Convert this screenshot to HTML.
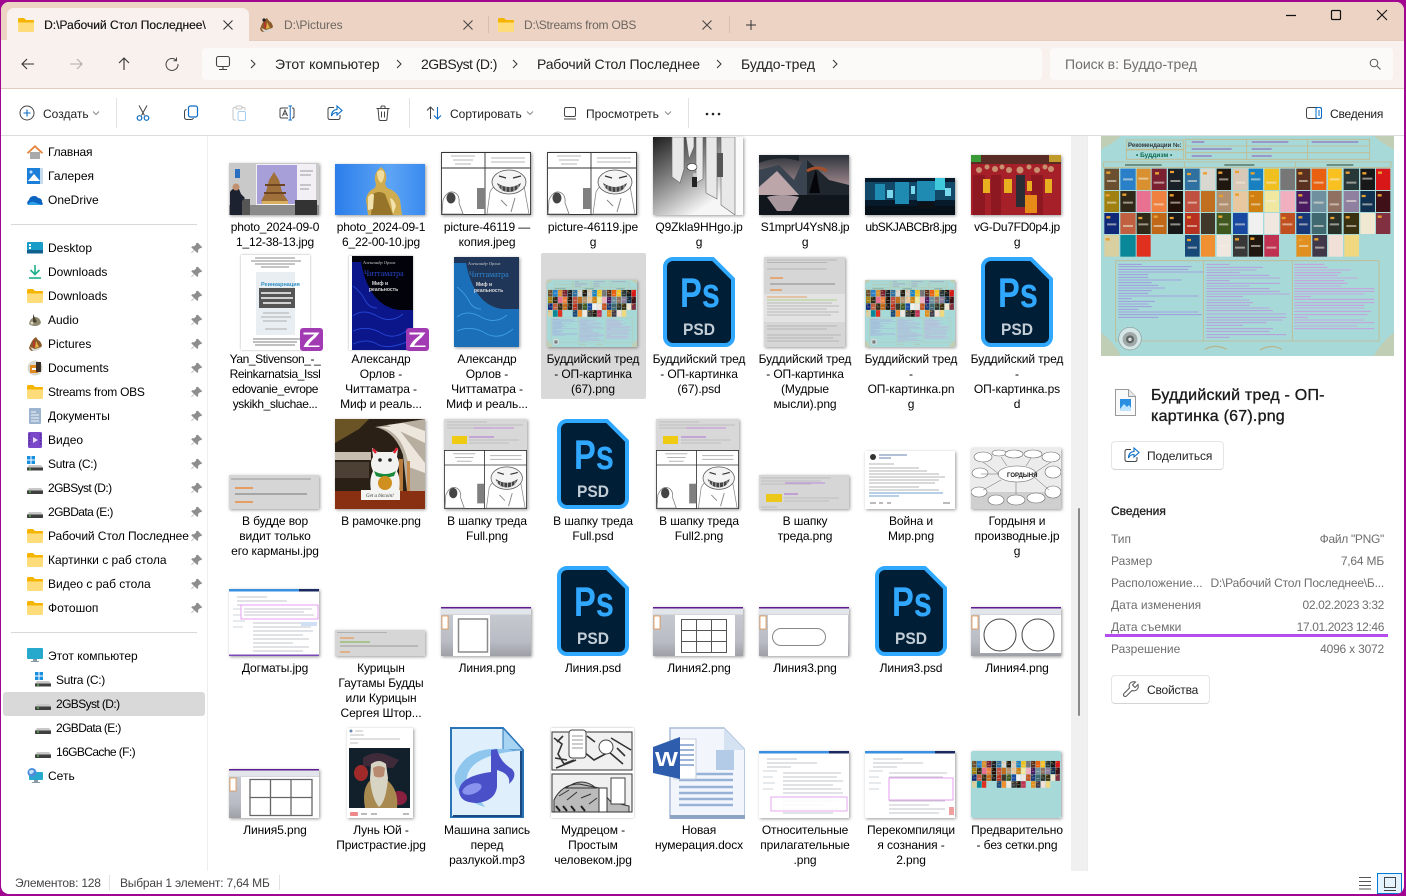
<!DOCTYPE html>
<html lang="ru"><head><meta charset="utf-8"><title>Проводник</title>
<style>
*{box-sizing:border-box}
html,body{margin:0;padding:0;width:1406px;height:896px;overflow:hidden;background:#a0068f;font-family:"Liberation Sans","Noto Sans CJK SC",sans-serif;font-size:12px;color:#111}
#w{position:absolute;left:1px;top:2px;width:1403px;height:892px;background:#fff;border-radius:8px;overflow:hidden}
#r{position:absolute;left:-1px;top:-2px;width:1406px;height:896px}
.a{position:absolute}
.i{position:absolute;width:16px;height:16px;overflow:visible}
.n{position:absolute;line-height:16px;white-space:nowrap;color:#000}
.b{position:absolute;font-size:14px;line-height:18px;white-space:nowrap;color:#222}
.l{position:absolute;width:106px;text-align:center;line-height:15px;white-space:nowrap;color:#000;letter-spacing:-.1px}
.t{position:absolute;box-shadow:1px 1px 3px rgba(0,0,0,.4);filter:blur(.3px);display:block}
.p{position:absolute;display:block;width:72px;height:90px}
.d{position:absolute;line-height:16px;color:#6e6e6e;white-space:nowrap}
.v{position:absolute;right:22px;line-height:16px;color:#6e6e6e;white-space:nowrap;letter-spacing:-.2px}
.s{position:absolute;background:#e2e2e2;width:1px}
.nar{letter-spacing:-.6px}
</style></head><body>
<svg width="0" height="0" style="position:absolute"><defs>
<symbol id="folder" viewBox="0 0 16 16"><path d="M0 2.500Q0 1 1.500 1H6l2 2h7q1 0 1 1v1H0z" fill="#f4b400"/><path d="M0 5h16v8.500q0 1.500-1.500 1.500h-13Q0 15 0 13.500z" fill="#ffdc7a"/><path d="M0 5h16v1H0z" fill="#fbc93a"/></symbol>
<symbol id="drive" viewBox="0 0 16 16"><path d="M2 8h12l2 2.500H0z" fill="#c9c9c9"/><rect y="10.500" width="16" height="3.500" rx=".5" fill="#3f3f3f"/><rect x="2" y="11.500" width="2" height="1" fill="#5fe05f"/></symbol>
<symbol id="win" viewBox="0 0 16 16"><path d="M0 0h3.500v3.500H0zM4.500 0H8v3.500H4.500zM0 4.500h3.500V8H0zM4.500 4.500H8V8H4.500z" fill="#1a8fe0"/><path d="M6 9h8l2 2.500H0L2 9z" fill="#c9c9c9"/><rect y="11.500" width="16" height="3" fill="#3f3f3f"/><rect x="2" y="12.500" width="2" height="1" fill="#5fe05f"/></symbol>
<symbol id="pin" viewBox="0 0 12 12"><path d="M6.800.8l4.400 4.400-1.100 1-1-.2-2 2 .1 2-1 1L3.400 8.200.7 11 .2 10.800 3 8 .2 5.200l1-1 2 .1 2-2-.2-1z" fill="#8e8e8e"/></symbol>
<symbol id="ps" viewBox="0 0 72 90"><path d="M10 2H50L70 22V80a8 8 0 0 1-8 8H10a8 8 0 0 1-8-8V10a8 8 0 0 1 8-8z" fill="#001e36" stroke="#31a8ff" stroke-width="4" stroke-linejoin="round"/><text x="17" y="50" font-family="Liberation Sans" font-weight="bold" font-size="42" fill="#31a8ff" textLength="40" lengthAdjust="spacingAndGlyphs">Ps</text><text x="20" y="78" font-family="Liberation Sans" font-weight="bold" font-size="17" fill="#c3cdd6" textLength="32" lengthAdjust="spacingAndGlyphs">PSD</text></symbol>
<symbol id="comic" viewBox="0 0 90 63" preserveAspectRatio="none"><rect width="90" height="63" fill="#fff"/><path d="M.5.500h89v62H.500zM44 .5v62M.5 16h89" fill="none" stroke="#333" stroke-width=".9"/><path d="M10 4h24M12 8h20M14 12h16M50 6h34M50 10h34" stroke="#b5b5b5" stroke-width="1"/><rect x="36" y="36" width="8" height="21" fill="#808080"/><path d="M2 48q4-9 10-8 7 2 6 11l4 11H1z" fill="#fff" stroke="#777" stroke-width=".8"/><ellipse cx="10" cy="46" rx="4.500" ry="5.500" fill="#444"/><path d="M46 62l3-22q3-6 8-8l26 2 5 28z" fill="#fff" stroke="#888" stroke-width=".8"/><ellipse cx="68" cy="30" rx="17" ry="12" fill="#f4f4f4" stroke="#555" stroke-width=".8"/><path d="M56 31q12 8 24 0-3 9-12 9t-12-9z" fill="#444"/><path d="M58 33v5M61 34v6M65 35v6M69 35v6M73 34v6M77 33v5" stroke="#ddd" stroke-width=".8"/><path d="M58 24l7 2M72 26l8-2" stroke="#333" stroke-width="1.200"/><path d="M74 46l-4 14M60 48l6 6" stroke="#888"/></symbol>
<symbol id="books" viewBox="18 0 879 660" preserveAspectRatio="none">
<g><rect x="28" y="98" width="44" height="64" fill="#6a5030"/><rect x="76" y="98" width="46" height="64" fill="#2a80c8"/><rect x="125" y="98" width="42" height="64" fill="#d89030"/><rect x="170" y="98" width="45" height="64" fill="#7a2030"/><rect x="219" y="98" width="45" height="64" fill="#1a2028"/><rect x="270" y="98" width="44" height="64" fill="#3070a0"/><rect x="318" y="98" width="42" height="64" fill="#d8d8d0"/><rect x="365" y="98" width="43" height="64" fill="#201810"/><rect x="414" y="98" width="44" height="64" fill="#d8c8b8"/><rect x="461" y="98" width="43" height="64" fill="#1880c0"/><rect x="508" y="98" width="44" height="64" fill="#f0c020"/><rect x="556" y="98" width="44" height="64" fill="#777"/><rect x="604" y="98" width="42" height="64" fill="#5a3020"/><rect x="650" y="98" width="44" height="64" fill="#e86010"/><rect x="699" y="98" width="41" height="64" fill="#f8c020"/><rect x="746" y="98" width="46" height="64" fill="#283838"/><rect x="796" y="98" width="44" height="64" fill="#181818"/><rect x="843" y="98" width="43" height="64" fill="#d81818"/></g>
<g><rect x="28" y="165" width="44" height="63" fill="#a08010"/><rect x="76" y="165" width="46" height="63" fill="#302818"/><rect x="125" y="165" width="42" height="63" fill="#e87090"/><rect x="170" y="165" width="45" height="63" fill="#f08040"/><rect x="219" y="165" width="45" height="63" fill="#201008"/><rect x="270" y="165" width="44" height="63" fill="#c05040"/><rect x="318" y="165" width="42" height="63" fill="#c07020"/><rect x="365" y="165" width="43" height="63" fill="#b09070"/><rect x="414" y="165" width="44" height="63" fill="#e8c8a0"/><rect x="461" y="165" width="43" height="63" fill="#d08010"/><rect x="508" y="165" width="44" height="63" fill="#f0e8a0"/><rect x="556" y="165" width="44" height="63" fill="#f0b0c0"/><rect x="604" y="165" width="42" height="63" fill="#4a1a60"/><rect x="650" y="165" width="44" height="63" fill="#7090a0"/><rect x="699" y="165" width="41" height="63" fill="#907060"/><rect x="746" y="165" width="46" height="63" fill="#9080a0"/><rect x="796" y="165" width="44" height="63" fill="#103050"/><rect x="843" y="165" width="43" height="63" fill="#401018"/></g>
<g><rect x="28" y="231" width="44" height="63" fill="#102878"/><rect x="76" y="231" width="46" height="63" fill="#c06040"/><rect x="125" y="231" width="42" height="63" fill="#302818"/><rect x="170" y="231" width="45" height="63" fill="#c06818"/><rect x="219" y="231" width="45" height="63" fill="#181818"/><rect x="270" y="231" width="44" height="63" fill="#b83020"/><rect x="318" y="231" width="42" height="63" fill="#403828"/><rect x="365" y="231" width="43" height="63" fill="#405820"/><rect x="414" y="231" width="44" height="63" fill="#1848a0"/><rect x="461" y="231" width="43" height="63" fill="#f0f0f0"/><rect x="508" y="231" width="44" height="63" fill="#f0e8e0"/><rect x="556" y="231" width="44" height="63" fill="#c05020"/><rect x="604" y="231" width="42" height="63" fill="#183878"/><rect x="650" y="231" width="44" height="63" fill="#406870"/><rect x="699" y="231" width="41" height="63" fill="#283028"/><rect x="746" y="231" width="46" height="63" fill="#383010"/><rect x="796" y="231" width="44" height="63" fill="#f0e8d0"/><rect x="843" y="231" width="43" height="63" fill="#803040"/></g>
<g><rect x="28" y="297" width="44" height="65" fill="#d8d0a0"/><rect x="76" y="297" width="46" height="65" fill="#088898"/><rect x="125" y="297" width="42" height="65" fill="#e03020"/><rect x="270" y="297" width="44" height="65" fill="#184878"/><rect x="318" y="297" width="42" height="65" fill="#f09030"/><rect x="365" y="297" width="43" height="65" fill="#f0e8e0"/><rect x="414" y="297" width="44" height="65" fill="#383838"/><rect x="461" y="297" width="43" height="65" fill="#201810"/><rect x="508" y="297" width="44" height="65" fill="#c03050"/><rect x="604" y="297" width="44" height="65" fill="#e09020"/><rect x="652" y="297" width="44" height="65" fill="#403848"/><rect x="700" y="297" width="44" height="65" fill="#f0e0d8"/><rect x="748" y="297" width="44" height="65" fill="#f0d880"/></g>
<path d="M34 110h12M180 112h12M225 108h12M276 114h12M324 112h12M370 110h12M420 108h12M467 112h12M610 112h12M752 110h12M802 112h12M849 110h12M32 178h12M82 176h12M224 178h12M372 180h12M420 176h12M466 180h12M610 178h12M800 180h12M848 178h12M34 244h12M130 246h12M176 242h12M224 246h12M276 244h12M370 242h12M560 246h12M610 244h12M706 246h12M752 244h12M848 242h12M32 310h12M276 312h12M420 310h12M466 308h12M610 312h12M658 310h12" stroke="#e8a030" stroke-width="7"/>
<path d="M36 135h28M84 130h30M130 128h30M176 140h32M226 135h30M278 135h28M372 130h28M422 140h28M468 130h28M514 140h30M612 135h26M656 140h30M704 130h30M754 140h30M802 128h30M36 200h28M84 200h30M176 205h30M226 200h30M278 200h28M372 205h28M468 205h28M514 195h30M612 200h26M656 200h30M704 205h28M754 195h30M802 205h30M36 265h28M84 270h30M130 265h30M176 270h30M226 265h30M276 270h30M372 265h28M420 265h30M562 265h30M612 265h26M656 270h30M704 265h28M754 270h30M278 335h28M372 330h28M420 335h30M468 330h28M514 335h30M612 330h28M660 335h28" stroke="#f4efe2" stroke-width="6" opacity=".55"/>
</symbol>
<symbol id="poster" viewBox="18 0 879 660" preserveAspectRatio="none"><rect x="18" width="879" height="660" fill="#a8d9d9"/>
<path d="M18 0h60q-20 20-60 40zM897 0h-60q20 20 60 40zM18 660h60q-20-40-60-70zM897 660h-60q20-40 60-70z" fill="#cfc79b" opacity=".6"/>
<path d="M94 12h172v30H94zM94 40h172v30H94zM272 10h552v60H272zM272 30h552M272 50h552M455 10v60M638 10v60M26 78h862v16H26zM268 78v16M602 78v16M62 374h790v241H62zM325 374v241M592 374v241" fill="none" stroke="#c2b98c" stroke-width="2.500"/>
<use href="#books" x="18" width="879" height="660"/>
<path d="M290 18h38M470 18h110M650 18h140M290 39h120M470 39h60M290 60h60M470 60h60" stroke="#8a4fb8" stroke-width="3.500" opacity=".75"/>
<path d="M90 87h110M388 87h90M695 87h80" stroke="#4e6a58" stroke-width="5" opacity=".75"/>
<path d="M70 385h70M70 392h220M70 400h210M70 408h255M70 416h90M70 424h90M70 432h190M70 440h100M70 448h120M70 456h140M70 464h100M70 472h90M70 480h240M70 488h40M70 496h110M70 504h90M70 512h100M70 520h60M70 528h240M70 536h250M70 544h120" stroke="#9a70e0" stroke-width="2.400" opacity=".7"/>
<path d="M334 385h70M334 394h170M334 402h150M334 410h100M334 418h190M334 426h220M334 434h70M334 442h220M334 450h130M334 458h190M334 466h220M334 474h250M334 482h110M334 492h130M334 500h140M334 508h130M334 516h190M334 524h200M334 534h240M334 544h240M334 552h230M334 560h180M334 568h110M334 578h200M334 586h190M334 596h240M334 604h70" stroke="#bf78dc" stroke-width="2.400" opacity=".7"/>
<path d="M598 385h90M598 394h100M598 402h170M598 410h140M598 418h130M598 426h190M598 434h150M598 442h160M598 450h140M598 458h240M598 466h240M598 474h210M598 482h50M598 490h240M598 500h240M598 508h210M598 516h210M598 526h230M598 536h220M598 544h40M598 552h210M598 560h240M598 570h190M598 578h240" stroke="#d67fe0" stroke-width="2.400" opacity=".75"/>
<circle cx="105" cy="608" r="34" fill="#d4e6e6" stroke="#8a9a9a" stroke-width="2"/><circle cx="105" cy="610" r="22" fill="#a0a8a8"/><circle cx="105" cy="610" r="12" fill="#5e6666"/><circle cx="105" cy="610" r="5" fill="#ddd"/>
<path d="M330 640q30-18 65 0M495 642q35-20 65-2" fill="none" stroke="#b9ae7a" stroke-width="4" opacity=".8"/>
</symbol>
<symbol id="forum" viewBox="0 0 90 34" preserveAspectRatio="none"><rect width="90" height="34" fill="#d6d6d6"/><path d="M2 4h80" stroke="#a5a5a5" stroke-width="1.200"/><path d="M6 13h18" stroke="#ea8a3a" stroke-width="1.600"/><path d="M6 19h72" stroke="#8a8a8a" stroke-width="1.200"/><path d="M6 27h18" stroke="#ea8a3a" stroke-width="1.600"/></symbol>
<symbol id="pptbase" viewBox="0 0 90 49" preserveAspectRatio="none"><defs><linearGradient id="pg" x1="0" y1="0" x2="0" y2="1"><stop offset="0" stop-color="#c9ccd2"/><stop offset=".7" stop-color="#b9bcc4"/><stop offset="1" stop-color="#9ea0a6"/></linearGradient></defs><rect width="90" height="49" fill="url(#pg)"/><rect width="90" height="1.500" fill="#5f1d91"/><rect y="1.500" width="90" height="6" fill="#e2e5ea"/><rect x="1" y="9" width="6" height="13" fill="#fff" stroke="#e0883a" stroke-width=".7"/></symbol>
<symbol id="badge" viewBox="0 0 23 23"><rect width="23" height="23" rx="3" fill="#a23bb3"/><path d="M3.500 4.500h16l-4 5Q10 14 8 17.500h11.500v1.500H3.500q2-5 7.500-9.500l3.500-3H3.500z" fill="#fff"/></symbol>
<symbol id="webdoc" viewBox="0 0 90 67" preserveAspectRatio="none"><rect width="90" height="67" fill="#fff"/><rect width="90" height="2.500" fill="#3a8fe0"/><rect x="70" width="20" height="2.500" fill="#1a2a60"/><path d="M8 8h30M8 12h50M8 16h24M24 22h58M24 26h54M24 30h60M24 34h50M24 38h58M24 42h60M24 46h50M24 50h56M24 54h40M24 58h56M24 62h50" stroke="#aeb4bd" stroke-width=".8"/><path d="M4 20h14M4 26h10M4 32h12M4 38h10" stroke="#c0c6d0" stroke-width=".8"/></symbol>
</defs></svg>

<div id="w"><div id="r">
<!-- title bar -->
<div class="a" style="left:0;top:0;width:1406px;height:40px;background:#ecd3c3"></div>
<div class="a" style="left:7px;top:8px;width:242px;height:34px;background:#f9f1ed;border-radius:7px 7px 0 0"></div>
<svg class="i" style="left:18px;top:17px"><use href="#folder"/></svg>
<div class="n" style="left:44px;top:17px;width:165px;overflow:hidden;color:#1a1a1a;text-shadow:.2px 0 0 #1a1a1a">D:\Рабочий Стол Последнее\</div>
<svg class="i" style="left:220px;top:17px" viewBox="0 0 16 16"><path d="M3.500 3.500l9 9M12.500 3.500l-9 9" stroke="#333" stroke-width="1" fill="none"/></svg>
<svg class="i" style="left:258px;top:17px" viewBox="0 0 16 16"><path d="M2 12q3-9 7-11l2 3q3 1 4 6-3 4-9 5-3 0-4-3z" fill="#8b5a2b"/><path d="M6 3l3 6-3 3z" fill="#b8372c"/><path d="M9 5l3 6-4 1z" fill="#e0b040"/><path d="M3 11l5 2 6-2-2 3-6 1z" fill="#d8d8d0"/><circle cx="6" cy="3" r="1.600" fill="#222"/></svg>
<div class="n" style="left:284px;top:17px;color:#6d6561">D:\Pictures</div>
<svg class="i" style="left:460px;top:17px" viewBox="0 0 16 16"><path d="M3.500 3.500l9 9M12.500 3.500l-9 9" stroke="#444" stroke-width="1" fill="none"/></svg>
<div class="a" style="left:488px;top:16px;width:1px;height:17px;background:#d6bfb0"></div>
<svg class="i" style="left:498px;top:17px"><use href="#folder"/></svg>
<div class="n" style="left:524px;top:17px;color:#6d6561;letter-spacing:-.2px">D:\Streams from OBS</div>
<svg class="i" style="left:699px;top:17px" viewBox="0 0 16 16"><path d="M3.500 3.500l9 9M12.500 3.500l-9 9" stroke="#444" stroke-width="1" fill="none"/></svg>
<div class="a" style="left:729px;top:16px;width:1px;height:17px;background:#d6bfb0"></div>
<svg class="i" style="left:743px;top:17px" viewBox="0 0 16 16"><path d="M8 3v10M3 8h10" stroke="#333" stroke-width="1" fill="none"/></svg>
<svg class="i" style="left:1283px;top:7px" viewBox="0 0 16 16"><path d="M3 8.500h10" stroke="#111" stroke-width="1.200"/></svg>
<svg class="i" style="left:1328px;top:7px" viewBox="0 0 16 16"><rect x="3.500" y="3.500" width="9" height="9" rx="1" fill="none" stroke="#111" stroke-width="1.200"/></svg>
<svg class="i" style="left:1374px;top:7px" viewBox="0 0 16 16"><path d="M3 3l10 10M13 3L3 13" stroke="#111" stroke-width="1.100"/></svg>

<!-- address row -->
<div class="a" style="left:0;top:40px;width:1406px;height:48px;background:#f9f1ed"></div>
<div class="a" style="top:40px;right:0;height:0;border-top:1px solid #e3cebf;left:249px"></div>
<div class="a" style="left:0;top:88px;width:1406px;height:1px;background:#e0cdbf"></div>
<div class="a" style="left:202px;top:48px;width:840px;height:32px;background:#fcfaf8;border-radius:4px"></div>
<div class="a" style="left:1050px;top:48px;width:343px;height:32px;background:#fcfaf8;border-radius:4px"></div>
<svg class="i" style="left:20px;top:56px" viewBox="0 0 16 16"><path d="M14 8H2M7 3L2 8l5 5" fill="none" stroke="#333" stroke-width="1.100"/></svg>
<svg class="i" style="left:68px;top:56px" viewBox="0 0 16 16"><path d="M2 8h12M9 3l5 5-5 5" fill="none" stroke="#b4aca8" stroke-width="1.100"/></svg>
<svg class="i" style="left:116px;top:56px" viewBox="0 0 16 16"><path d="M8 14V2M3 7l5-5 5 5" fill="none" stroke="#333" stroke-width="1.100"/></svg>
<svg class="i" style="left:164px;top:56px" viewBox="0 0 16 16"><path d="M12.500 4.500A6 6 0 1 0 14 8M12.500 1.500v3.200H9.500" fill="none" stroke="#444" stroke-width="1"/></svg>
<svg class="i" style="left:215px;top:55px" viewBox="0 0 16 16"><rect x="1.500" y="1.500" width="13" height="10" rx="2" fill="none" stroke="#444" stroke-width="1.100"/><path d="M4 14.500h8M8 11.500v3" stroke="#444" stroke-width="1.100"/></svg>
<svg class="a" style="left:250px;top:58px;width:6px;height:12px" viewBox="0 0 6 12"><path d="M1 2l4 4-4 4" fill="none" stroke="#333"/></svg>
<div class="b" style="left:275px;top:55px">Этот компьютер</div>
<svg class="a" style="left:396px;top:58px;width:6px;height:12px" viewBox="0 0 6 12"><path d="M1 2l4 4-4 4" fill="none" stroke="#333"/></svg>
<div class="b" style="left:421px;top:55px;letter-spacing:-.55px">2GBSyst (D:)</div>
<svg class="a" style="left:512px;top:58px;width:6px;height:12px" viewBox="0 0 6 12"><path d="M1 2l4 4-4 4" fill="none" stroke="#333"/></svg>
<div class="b" style="left:537px;top:55px;letter-spacing:-.18px">Рабочий Стол Последнее</div>
<svg class="a" style="left:716px;top:58px;width:6px;height:12px" viewBox="0 0 6 12"><path d="M1 2l4 4-4 4" fill="none" stroke="#333"/></svg>
<div class="b" style="left:741px;top:55px">Буддо-тред</div>
<svg class="a" style="left:832px;top:58px;width:6px;height:12px" viewBox="0 0 6 12"><path d="M1 2l4 4-4 4" fill="none" stroke="#333"/></svg>
<div class="b" style="left:1065px;top:55px;color:#6e6e6e">Поиск в: Буддо-тред</div>
<svg class="i" style="left:1367px;top:56px" viewBox="0 0 16 16"><circle cx="7" cy="7" r="3.800" fill="none" stroke="#555"/><path d="M10 10l3.500 3.500" stroke="#555"/></svg>

<!-- command bar -->
<div class="a" style="left:0;top:135px;width:1406px;height:1px;background:#dcdcdc"></div>
<svg class="i" style="left:19px;top:105px" viewBox="0 0 16 16"><circle cx="8" cy="8" r="7" fill="none" stroke="#444"/><path d="M8 4.500v7M4.500 8h7" stroke="#0a6cc4" stroke-width="1.100"/></svg>
<div class="n" style="left:43px;top:106px;color:#222">Создать</div>
<svg class="a" style="left:92px;top:110px;width:8px;height:6px" viewBox="0 0 8 6"><path d="M1 1.500l3 3 3-3" fill="none" stroke="#8a8a8a"/></svg>
<div class="s" style="left:116px;top:98px;height:30px"></div>
<svg class="i" style="left:135px;top:105px" viewBox="0 0 16 16"><path d="M4 .5l5.500 10M12 .5L6.500 10.500" stroke="#444" fill="none"/><circle cx="4.500" cy="13" r="2.300" fill="none" stroke="#0a6cc4" stroke-width="1.200"/><circle cx="11.500" cy="13" r="2.300" fill="none" stroke="#0a6cc4" stroke-width="1.200"/></svg>
<svg class="i" style="left:183px;top:105px" viewBox="0 0 16 16"><rect x="5.500" y="1" width="9" height="11" rx="2" fill="none" stroke="#0a6cc4" stroke-width="1.200"/><path d="M3.500 4.500Q1.500 5 1.500 7v5q0 2.500 2.500 2.500h4q2 0 2.500-1.500" fill="none" stroke="#444"/></svg>
<svg class="i" style="left:231px;top:105px" viewBox="0 0 16 16"><path d="M5 2.500H3.500Q2 2.500 2 4v9.500Q2 15 3.500 15H5M11 2.500h1.500q1.500 0 1.500 1.500v1.500" fill="none" stroke="#c6c6c6"/><rect x="5" y="1" width="6" height="3" rx="1" fill="none" stroke="#c6c6c6"/><rect x="7" y="6.500" width="7.500" height="9" rx="1.500" fill="none" stroke="#a9cfee"/></svg>
<svg class="i" style="left:279px;top:105px" viewBox="0 0 16 16"><path d="M9 3H2.500Q1 3 1 4.500v7Q1 13 2.500 13H9" fill="none" stroke="#444"/><path d="M13 3h.5Q15 3 15 4.500v7q0 1.500-1.500 1.500H13" fill="none" stroke="#444"/><path d="M9.500 1H13M9.500 15H13M11.200 1v14" stroke="#0a6cc4" fill="none"/><path d="M3.500 11L6 5l2.500 6M4.500 9h3" fill="none" stroke="#444"/></svg>
<svg class="i" style="left:327px;top:105px" viewBox="0 0 16 16"><path d="M7 2.500H3Q1 2.500 1 4.500v8Q1 14.500 3 14.500h8q2 0 2-2V10" fill="none" stroke="#444"/><path d="M10 1l5 4.500L10 10V7.500Q6 7.500 4.500 11q0-6 5.500-6.500z" fill="none" stroke="#0a6cc4" stroke-width="1.100"/></svg>
<svg class="i" style="left:375px;top:105px" viewBox="0 0 16 16"><path d="M1.500 3.500h13M6 3.500V2q0-1 1-1h2q1 0 1 1v1.500M3 3.500l1 10.500q0 1.500 1.500 1.500h5q1.500 0 1.500-1.500L13 3.500M6.500 6.500v6M9.500 6.500v6" fill="none" stroke="#444"/></svg>
<div class="s" style="left:409px;top:98px;height:30px"></div>
<svg class="i" style="left:426px;top:105px" viewBox="0 0 16 16"><path d="M4.500 14V2M1 5.500L4.500 2 8 5.500" fill="none" stroke="#444"/><path d="M11.500 2v12M8 10.500l3.500 3.500 3.500-3.500" fill="none" stroke="#0a6cc4" stroke-width="1.100"/></svg>
<div class="n" style="left:450px;top:106px;color:#222">Сортировать</div>
<svg class="a" style="left:526px;top:110px;width:8px;height:6px" viewBox="0 0 8 6"><path d="M1 1.500l3 3 3-3" fill="none" stroke="#8a8a8a"/></svg>
<svg class="i" style="left:562px;top:105px" viewBox="0 0 16 16"><rect x="2.500" y="2.500" width="11" height="9" rx="1.500" fill="none" stroke="#444"/><path d="M2 14h12" stroke="#444"/></svg>
<div class="n" style="left:586px;top:106px;color:#222">Просмотреть</div>
<svg class="a" style="left:664px;top:110px;width:8px;height:6px" viewBox="0 0 8 6"><path d="M1 1.500l3 3 3-3" fill="none" stroke="#8a8a8a"/></svg>
<div class="s" style="left:688px;top:98px;height:30px"></div>
<svg class="i" style="left:705px;top:106px" viewBox="0 0 16 16"><circle cx="2" cy="8" r="1.300" fill="#222"/><circle cx="8" cy="8" r="1.300" fill="#222"/><circle cx="14" cy="8" r="1.300" fill="#222"/></svg>
<svg class="i" style="left:1306px;top:105px" viewBox="0 0 16 16"><rect x=".5" y="2.500" width="15" height="11" rx="2" fill="none" stroke="#444"/><rect x="10" y="2.500" width="5.500" height="11" rx="1.500" fill="none" stroke="#0a6cc4"/><path d="M12 6h2M12 8h2M12 10h2" stroke="#0a6cc4"/></svg>
<div class="n" style="left:1330px;top:106px;color:#222;letter-spacing:-.2px">Сведения</div>

<!-- nav -->
<div class="a" style="left:207px;top:136px;width:1px;height:735px;background:#eee"></div>
<svg class="i" style="left:27px;top:144px" viewBox="0 0 16 16"><path d="M3 8h10v7H3z" fill="#aaa"/><path d="M8 1L0 8.500 1 10l7-6.500L15 10l1-1.500z" fill="#e8833a"/></svg>
<div class="n" style="left:48px;top:144px;letter-spacing:-.2px">Главная</div>
<svg class="i" style="left:27px;top:168px" viewBox="0 0 16 16"><rect width="16" height="16" fill="#1e7fd8"/><rect x="13" width="3" height="16" fill="#c8dcf0"/><path d="M1 13l6-7 6 7z" fill="#fff"/><circle cx="4" cy="4" r="1.500" fill="#bfe0ff"/></svg>
<div class="n" style="left:48px;top:168px">Галерея</div>
<svg class="i" style="left:27px;top:192px" viewBox="0 0 16 16"><path d="M1 13q-2-3 1-5 1-4 5-4 3 0 4 2 4 0 4 4 2 3-1 3z" fill="#0a64c0"/><path d="M1 13q2-4 6-3l8 3z" fill="#2fa0ea"/></svg>
<div class="n" style="left:48px;top:192px">OneDrive</div>
<div class="a" style="left:11px;top:224px;width:186px;height:1px;background:#d8d8d8"></div>

<svg class="i" style="left:27px;top:240px" viewBox="0 0 16 16"><rect y="2" width="16" height="11" rx="1" fill="#1a9cc8"/><rect y="10" width="16" height="3.500" fill="#0f5f8f"/><rect x="2" y="4" width="2" height="2" fill="#fff"/><rect x="2" y="7" width="2" height="2" fill="#fff"/></svg>
<div class="n" style="left:48px;top:240px">Desktop</div>
<svg class="i" style="left:27px;top:264px" viewBox="0 0 16 16"><path d="M8 1v9M3.500 6l4.500 4.500L12.500 6" fill="none" stroke="#1bb08a" stroke-width="1.600"/><path d="M2 14h12" stroke="#1bb08a" stroke-width="1.600"/></svg>
<div class="n" style="left:48px;top:264px">Downloads</div>
<svg class="i" style="left:27px;top:288px"><use href="#folder"/></svg>
<div class="n" style="left:48px;top:288px">Downloads</div>
<svg class="i" style="left:27px;top:312px" viewBox="0 0 16 16"><path d="M2 12q1-6 6-7 5 0 6 6-2 3-6 3t-6-2z" fill="#8f8a70"/><path d="M6 2l4 8-4 1z" fill="#4a4030"/><circle cx="5" cy="11" r="1.500" fill="#d9d5c2"/></svg>
<div class="n" style="left:48px;top:312px">Audio</div>
<svg class="i" style="left:27px;top:336px" viewBox="0 0 16 16"><path d="M2 12q3-9 7-11l2 3q3 1 4 6-3 4-9 5-3 0-4-3z" fill="#8b5a2b"/><path d="M6 3l3 6-3 3z" fill="#b8372c"/><path d="M9 5l3 6-4 1z" fill="#e0b040"/><path d="M3 11l5 2 6-2-2 3-6 1z" fill="#d8d8d0"/></svg>
<div class="n" style="left:48px;top:336px">Pictures</div>
<svg class="i" style="left:27px;top:360px" viewBox="0 0 16 16"><circle cx="8" cy="8" r="7.500" fill="#d8d8d0"/><path d="M3 5h8v8H3z" fill="#e08a20"/><path d="M9 2h5v10H9z" fill="#3a3028"/><path d="M5 8h4v2H5z" fill="#fff"/></svg>
<div class="n" style="left:48px;top:360px">Documents</div>
<svg class="i" style="left:27px;top:384px"><use href="#folder"/></svg>
<div class="n" style="left:48px;top:384px;letter-spacing:-.25px">Streams from OBS</div>
<svg class="i" style="left:27px;top:408px" viewBox="0 0 16 16"><rect x="2" y="0" width="12" height="16" rx="1" fill="#9db4d0"/><path d="M4 4h5M4 7h8M4 10h8M4 13h8" stroke="#eef3f8"/></svg>
<div class="n" style="left:48px;top:408px">Документы</div>
<svg class="i" style="left:27px;top:432px" viewBox="0 0 16 16"><rect x="1" width="14" height="16" rx="1.500" fill="#7a48c8"/><path d="M6 5l5 3-5 3z" fill="#e8dcf8"/><path d="M2.500 2v12M13.500 2v12" stroke="#4c2a90" stroke-dasharray="1.500 1.500" stroke-width="1.500"/></svg>
<div class="n" style="left:48px;top:432px">Видео</div>
<svg class="i" style="left:27px;top:456px"><use href="#win"/></svg>
<div class="n" style="left:48px;top:456px;letter-spacing:-.3px">Sutra (C:)</div>
<svg class="i" style="left:27px;top:480px"><use href="#drive"/></svg>
<div class="n nar" style="left:48px;top:480px">2GBSyst (D:)</div>
<svg class="i" style="left:27px;top:504px"><use href="#drive"/></svg>
<div class="n nar" style="left:48px;top:504px">2GBData (E:)</div>
<svg class="i" style="left:27px;top:528px"><use href="#folder"/></svg>
<div class="n" style="left:48px;top:528px;letter-spacing:-.1px">Рабочий Стол Последнее</div>
<svg class="i" style="left:27px;top:552px"><use href="#folder"/></svg>
<div class="n" style="left:48px;top:552px">Картинки с раб стола</div>
<svg class="i" style="left:27px;top:576px"><use href="#folder"/></svg>
<div class="n" style="left:48px;top:576px">Видео с раб стола</div>
<svg class="i" style="left:27px;top:600px"><use href="#folder"/></svg>
<div class="n" style="left:48px;top:600px">Фотошоп</div>
<svg class="a" style="left:191px;top:242px;width:12px;height:12px"><use href="#pin"/></svg><svg class="a" style="left:191px;top:266px;width:12px;height:12px"><use href="#pin"/></svg><svg class="a" style="left:191px;top:290px;width:12px;height:12px"><use href="#pin"/></svg><svg class="a" style="left:191px;top:314px;width:12px;height:12px"><use href="#pin"/></svg><svg class="a" style="left:191px;top:338px;width:12px;height:12px"><use href="#pin"/></svg><svg class="a" style="left:191px;top:362px;width:12px;height:12px"><use href="#pin"/></svg><svg class="a" style="left:191px;top:386px;width:12px;height:12px"><use href="#pin"/></svg><svg class="a" style="left:191px;top:410px;width:12px;height:12px"><use href="#pin"/></svg><svg class="a" style="left:191px;top:434px;width:12px;height:12px"><use href="#pin"/></svg><svg class="a" style="left:191px;top:458px;width:12px;height:12px"><use href="#pin"/></svg><svg class="a" style="left:191px;top:482px;width:12px;height:12px"><use href="#pin"/></svg><svg class="a" style="left:191px;top:506px;width:12px;height:12px"><use href="#pin"/></svg><svg class="a" style="left:191px;top:530px;width:12px;height:12px"><use href="#pin"/></svg><svg class="a" style="left:191px;top:554px;width:12px;height:12px"><use href="#pin"/></svg><svg class="a" style="left:191px;top:578px;width:12px;height:12px"><use href="#pin"/></svg><svg class="a" style="left:191px;top:602px;width:12px;height:12px"><use href="#pin"/></svg>
<div class="a" style="left:11px;top:632px;width:186px;height:1px;background:#d8d8d8"></div>
<svg class="i" style="left:27px;top:648px" viewBox="0 0 16 16"><rect width="16" height="11" rx="1" fill="#26a9cc"/><path d="M6 11h4v2h2v1H4v-1h2z" fill="#8a9aa5"/></svg>
<div class="n" style="left:48px;top:648px">Этот компьютер</div>
<svg class="i" style="left:35px;top:672px"><use href="#win"/></svg>
<div class="n" style="left:56px;top:672px;letter-spacing:-.3px">Sutra (C:)</div>
<div class="a" style="left:3px;top:692px;width:202px;height:24px;background:#d9d9d9;border-radius:3px"></div>
<svg class="i" style="left:35px;top:696px"><use href="#drive"/></svg>
<div class="n nar" style="left:56px;top:696px">2GBSyst (D:)</div>
<svg class="i" style="left:35px;top:720px"><use href="#drive"/></svg>
<div class="n nar" style="left:56px;top:720px">2GBData (E:)</div>
<svg class="i" style="left:35px;top:744px"><use href="#drive"/></svg>
<div class="n nar" style="left:56px;top:744px">16GBCache (F:)</div>
<svg class="i" style="left:27px;top:768px" viewBox="0 0 16 16"><rect x="2" y="4" width="14" height="8" rx="1" fill="#26a9cc"/><path d="M7 12h4v2h2v1H5v-1h2z" fill="#8a9aa5"/><circle cx="5" cy="4.500" r="4.500" fill="#4a8fdc"/><path d="M2 3q3-2 5 0-1 3-4 3z" fill="#cfe4f8"/></svg>
<div class="n" style="left:48px;top:768px">Сеть</div>

<!-- scrollbar -->
<div class="a" style="left:1071px;top:136px;width:16px;height:735px;background:#f0f0f0"></div>
<div class="a" style="left:1078px;top:508px;width:2px;height:208px;background:#8a8a8a;border-radius:1px"></div>
<div class="a" style="left:1087px;top:136px;width:1px;height:735px;background:#ececec"></div>

<!-- selected -->
<div class="a" style="left:541px;top:253px;width:105px;height:146px;background:#d9d9d9;border-radius:2px"></div>

<!-- ROW 1 -->
<svg class="t" style="left:229px;top:163px;width:90px;height:52px" viewBox="0 0 90 52"><rect width="90" height="52" fill="#c9c9c9"/><rect x="6" y="6" width="5" height="9" fill="#2a6fc0"/><rect x="27" y="1" width="60" height="41" fill="#f2f0f4"/><rect x="28" y="2" width="40" height="39" fill="#a7a0d8"/><path d="M32 38l5-9 3-12 5-8 5 8 3 12 6 9z" fill="#a0703a"/><path d="M36 22h20M35 30h22" stroke="#6e4520" stroke-width="2"/><path d="M33 38h26v3H33z" fill="#d8b060"/><path d="M71 8h13M71 12h11M71 22h11M71 26h9" stroke="#999"/><rect x="0" y="42" width="90" height="10" fill="#8a8a8a"/><rect x="66" y="37" width="22" height="15" fill="#333"/><rect x="11" y="36" width="10" height="16" fill="#555"/><path d="M1 52V29q4-6 9-3l2 5 4 4-3 3v14z" fill="#1c2230"/><circle cx="7" cy="24" r="3.500" fill="#c09070"/></svg>
<svg class="t" style="left:335px;top:164px;width:90px;height:51px" viewBox="0 0 90 51"><defs><linearGradient id="sk" x1="0" x2="1"><stop offset="0" stop-color="#2b7dea"/><stop offset=".6" stop-color="#5da5f5"/><stop offset="1" stop-color="#3a8aef"/></linearGradient></defs><rect width="90" height="51" fill="url(#sk)"/><path d="M33 51l-2-15q1-9 9-12l1-4q-4-10 5-17 8 6 4 17l2 4q10 3 13 12l2 15z" fill="#d0ac50"/><path d="M42 8q4-4 7 0 1 7-3 11-4-3-4-11z" fill="#f0dc9c"/><path d="M38 30q6-4 12 0l8 21H36z" fill="#96742a"/><path d="M33 33q4-5 6-2l-1 14-5 1zM55 34q4 1 6 8l-3 8z" fill="#f2e2ae"/></svg>
<svg class="t" style="left:441px;top:152px;width:90px;height:63px"><use href="#comic" width="90" height="63"/></svg>
<svg class="t" style="left:547px;top:152px;width:90px;height:63px"><use href="#comic" width="90" height="63"/></svg>
<svg class="t" style="left:653px;top:137px;width:90px;height:78px" viewBox="0 0 90 78"><defs><linearGradient id="gy" x1="0" y1="0" x2=".75" y2="1"><stop offset="0" stop-color="#1c1c1c"/><stop offset=".45" stop-color="#8a8a8a"/><stop offset=".85" stop-color="#f6f6f6"/></linearGradient></defs><rect width="90" height="78" fill="url(#gy)"/><rect x="82" width="8" height="78" fill="#fbfbfb"/><path d="M19 0h12v32l-4 14-8-6zM33 0h8v10l-5 12zM43 0h7v42l-7 4zM53 0h11v62l-11-6zM68 0h14v78l-14-10z" fill="#e8e8e8" stroke="#666" stroke-width=".6"/><rect x="64" y="16" width="6" height="24" fill="#555"/><ellipse cx="39" cy="30" rx="5" ry="3.500" fill="#fff" stroke="#222" stroke-width=".6"/><circle cx="42" cy="38" r="2" fill="#ccc"/><rect x="39" y="40" width="5" height="10" fill="#222"/></svg>
<svg class="t" style="left:759px;top:155px;width:90px;height:60px" viewBox="0 0 90 60"><defs><linearGradient id="ml" x1="0" y1="0" x2="0" y2="1"><stop offset="0" stop-color="#2e343c"/><stop offset=".55" stop-color="#a88e92"/><stop offset="1" stop-color="#0f1318"/></linearGradient></defs><rect width="90" height="60" fill="url(#ml)"/><path d="M0 8Q20 0 40 6V0H0z" fill="#1e242c"/><path d="M0 15L20 10l15 15 10-22 18 22 27 5v30H0z" fill="#3a4450"/><path d="M0 32l18-16 22 24H0z" fill="#bca6aa"/><path d="M48 40V5l22 20 20 5v10z" fill="#20262e"/><rect x="0" y="40" width="90" height="20" fill="#10161c"/><path d="M8 42q15-4 32 0l-8 14H18z" fill="#a8989e"/><path d="M50 38q4-14 7-24l4 24z" fill="#06060a"/><path d="M48 16q10-6 20 0" fill="none" stroke="#a5502a" stroke-width="3"/></svg>
<svg class="t" style="left:865px;top:178px;width:90px;height:37px" viewBox="0 0 90 37"><rect width="90" height="37" fill="#071a2c"/><rect y="4" width="90" height="18" fill="#124968"/><path d="M10 6h10v16H10zM30 4h14v22H30zM52 3h18v20H52z" fill="#1f8ab2"/><path d="M70 0h10v12H70z" fill="#40c8dc"/><path d="M22 12h6v8h-6zM46 8h4v8h-4zM80 10h6v8h-6z" fill="#7ad8ee"/><rect y="28" width="90" height="9" fill="#061018"/><path d="M54 24h14l4 7H50z" fill="#0c1218"/></svg>
<svg class="t" style="left:971px;top:155px;width:90px;height:60px" viewBox="0 0 90 60"><rect width="90" height="60" fill="#a52028"/><rect width="90" height="9" fill="#5a2a24"/><rect x="0" y="0" width="10" height="7" fill="#3a9a3a"/><rect x="78" y="0" width="12" height="7" fill="#c09a2a"/><g fill="#8d1822"><rect x="2" y="20" width="12" height="40"/><rect x="20" y="20" width="10" height="40"/><rect x="60" y="20" width="12" height="40"/></g><g fill="#e8b020"><rect x="12" y="24" width="7" height="14"/><rect x="33" y="24" width="8" height="14"/><rect x="56" y="26" width="5" height="10"/><rect x="74" y="24" width="7" height="14"/></g><rect x="45" y="20" width="9" height="32" fill="#2a2e34"/><rect x="54" y="40" width="12" height="18" fill="#e88a18"/><g fill="#c89070"><circle cx="8" cy="15" r="3"/><circle cx="24" cy="14" r="3"/><circle cx="38" cy="15" r="3"/><circle cx="49" cy="15" r="3.500"/><circle cx="66" cy="15" r="3"/><circle cx="80" cy="14" r="3"/><circle cx="16" cy="12" r="2.500"/><circle cx="31" cy="12" r="2.500"/><circle cx="58" cy="12" r="2.500"/><circle cx="74" cy="12" r="2.500"/></g></svg>
<div class="l" style="left:222px;top:220px;letter-spacing:-.2px">photo_2024-09-0<br>1_12-38-13.jpg</div>
<div class="l" style="left:328px;top:220px;letter-spacing:-.2px">photo_2024-09-1<br>6_22-00-10.jpg</div>
<div class="l" style="left:434px;top:220px">picture-46119 —<br>копия.jpeg</div>
<div class="l" style="left:540px;top:220px">picture-46119.jpe<br>g</div>
<div class="l" style="left:646px;top:220px">Q9Zkla9HHgo.jp<br>g</div>
<div class="l" style="left:752px;top:220px;letter-spacing:-.3px">S1mprU4YsN8.jp<br>g</div>
<div class="l" style="left:858px;top:220px;letter-spacing:-.45px">ubSKJABCBr8.jpg</div>
<div class="l" style="left:964px;top:220px;letter-spacing:-.3px">vG-Du7FD0p4.jp<br>g</div>

<!-- ROW 2 -->
<svg class="t" style="left:241px;top:255px;width:69px;height:95px;box-shadow:0 0 2px rgba(0,0,0,.35)" viewBox="0 0 69 95"><rect width="69" height="95" fill="#fff"/><path d="M14 3h40M10 6h50M14 9h40M20 12h28" stroke="#666" stroke-width=".8"/><rect x="15" y="17" width="39" height="63" fill="#e8eef2"/><text x="20" y="31" font-size="5.500" font-weight="bold" fill="#2f8ec4" font-family="Liberation Sans">Реинкарнация</text><rect x="18" y="33" width="36" height="20" fill="#555"/><path d="M20 38h30M20 43h32M22 48h28" stroke="#e4e4e4" stroke-width="1.800"/><path d="M22 58h26M20 62h30M22 66h24M24 74h22" stroke="#999" stroke-width=".8"/><path d="M12 84h48M12 87h44M14 90h40" stroke="#555" stroke-width=".8"/></svg>
<svg class="t" style="left:349px;top:256px;width:64px;height:94px;box-shadow:0 0 2px rgba(0,0,0,.35)" viewBox="0 0 64 94"><rect width="64" height="94" fill="#0b168a"/><rect x="0" y="0" width="3" height="94" fill="#fff"/><path d="M3 0h61v54H50Q20 50 12 6L3 6z" fill="#02030a"/><path d="M4 60q10-8 24 0t26-2M4 75q14-6 28 2t28-4M4 88q14-6 24 0t30-2M4 30q8 6 12 14t12 8" fill="none" stroke="#2442d0"/><text x="14" y="8" font-size="4.500" font-style="italic" fill="#ccc" font-family="Liberation Serif">Александр Орлов</text><text x="15" y="20" font-size="8" fill="#2845c8" font-family="Liberation Serif">Читтаматра</text><text x="23" y="29" font-size="5" font-weight="bold" fill="#ddd" font-family="Liberation Sans">Миф и</text><text x="20" y="35" font-size="5" font-weight="bold" fill="#ddd" font-family="Liberation Sans">реальность</text></svg>
<svg class="t" style="left:454px;top:257px;width:65px;height:90px" viewBox="0 0 65 90"><rect width="65" height="90" fill="#1a6fb8"/><path d="M0 0h65v52H48Q20 48 12 6L0 6z" fill="#203658"/><path d="M3 60q10-8 24 0t26-2M3 74q14-6 28 2t28-4M3 30q8 6 12 14t12 8" fill="none" stroke="#3b9be0"/><text x="14" y="8" font-size="4.500" font-style="italic" fill="#ccc" font-family="Liberation Serif">Александр Орлов</text><text x="15" y="20" font-size="8" fill="#2f86d0" font-family="Liberation Serif">Читтаматра</text><text x="22" y="29" font-size="5" font-weight="bold" fill="#ddd" font-family="Liberation Sans">Миф и</text><text x="20" y="35" font-size="5" font-weight="bold" fill="#ddd" font-family="Liberation Sans">реальность</text></svg>
<svg class="a" style="left:300px;top:328px;width:23px;height:23px"><use href="#badge"/></svg>
<svg class="a" style="left:406px;top:328px;width:23px;height:23px"><use href="#badge"/></svg>
<svg class="t" style="left:547px;top:280px;width:90px;height:67px" viewBox="0 0 90 67"><use href="#poster" width="90" height="67"/></svg>
<svg class="p" style="left:663px;top:257px"><use href="#ps" width="72" height="90"/></svg>
<svg class="t" style="left:764px;top:257px;width:81px;height:90px" viewBox="0 0 81 90"><rect width="81" height="90" fill="#d6d6d6"/><path d="M3 3h70M3 5.500h60M3 12h60" stroke="#aaa" stroke-width=".8"/><path d="M6 21h13" stroke="#ea8a3a" stroke-width="1.200"/><path d="M6 27h65" stroke="#888" stroke-width="1"/><path d="M6 33h12" stroke="#ea8a3a" stroke-width="1.200"/><rect x="0" y="37" width="81" height="28" fill="#e3e3e3"/><path d="M3 40h40" stroke="#e08a3a" stroke-width=".8"/><path d="M3 43h70" stroke="#9ccc6a" stroke-width=".8"/><path d="M3 46h65M3 49h72M3 52h60M3 55h72M3 58h64M3 69h70M3 72h60M3 78h74M3 81h66M3 84h72" stroke="#aaa" stroke-width=".8"/></svg>
<svg class="t" style="left:865px;top:280px;width:90px;height:67px" viewBox="0 0 90 67"><use href="#poster" width="90" height="67"/></svg>
<svg class="p" style="left:981px;top:257px"><use href="#ps" width="72" height="90"/></svg>
<div class="l" style="left:222px;top:352px;letter-spacing:-.4px">Yan_Stivenson_-_<br>Reinkarnatsia_Issl<br>edovanie_evrope<br>yskikh_sluchae...</div>
<div class="l" style="left:328px;top:352px">Александр<br>Орлов -<br>Читтаматра -<br>Миф и реаль...</div>
<div class="l" style="left:434px;top:352px">Александр<br>Орлов -<br>Читтаматра -<br>Миф и реаль...</div>
<div class="l" style="left:540px;top:352px">Буддийский тред<br>- ОП-картинка<br>(67).png</div>
<div class="l" style="left:646px;top:352px">Буддийский тред<br>- ОП-картинка<br>(67).psd</div>
<div class="l" style="left:752px;top:352px">Буддийский тред<br>- ОП-картинка<br>(Мудрые<br>мысли).png</div>
<div class="l" style="left:858px;top:352px">Буддийский тред<br>-<br>ОП-картинка.pn<br>g</div>
<div class="l" style="left:964px;top:352px">Буддийский тред<br>-<br>ОП-картинка.ps<br>d</div>

<!-- ROW 3 -->
<svg class="t" style="left:229px;top:475px;width:90px;height:34px"><use href="#forum" width="90" height="34"/></svg>
<svg class="t" style="left:335px;top:419px;width:90px;height:90px" viewBox="0 0 90 90"><rect width="90" height="90" fill="#2a2016"/><path d="M0 0h34L24 10 0 24z" fill="#6a5426"/><path d="M90 0v72H72l-4-36Q60 12 40 8z" fill="#b8aea0"/><path d="M44 8q24 4 30 40l16 6V44L62 8zM52 6l38 18V12L68 4z" fill="#ece6dc"/><rect x="0" y="33" width="36" height="8" fill="#c8beb0"/><rect x="0" y="43" width="34" height="16" fill="#4c4034"/><rect x="64" y="40" width="4" height="34" fill="#b87a3a"/><rect x="72" y="42" width="3" height="32" fill="#c88a4a"/><rect y="72" width="90" height="18" fill="#8a3012"/><path d="M36 72q-2-12 2-20-4-8 0-14l-1-9 6 4h14l6-4-1 9q4 6 0 14 4 8 2 20z" fill="#f2f2f0"/><path d="M38 30l3 4M62 29l-3 5" stroke="#e02030" stroke-width="2.500"/><circle cx="45" cy="41" r="1.800" fill="#222"/><circle cx="55" cy="41" r="1.800" fill="#222"/><path d="M39 52q11 6 22 0l-2 5q-9 3-18 0z" fill="#1a8a3a"/><circle cx="50" cy="64" r="7" fill="#d09020"/><rect x="26" y="71" width="39" height="10" fill="#f4f4f2"/><text x="31" y="78" font-size="5" fill="#333" font-style="italic" font-family="Liberation Serif">Get a bitcoin!</text></svg>
<svg class="t" style="left:444px;top:419px;width:83px;height:90px" viewBox="0 0 83 90"><rect width="83" height="32" fill="#d8d8d8"/><path d="M3 3h40M3 6h76M3 9h46" stroke="#b5b5b5" stroke-width=".8"/><path d="M30 9h40" stroke="#c07ae0" stroke-width=".8"/><rect x="8" y="17" width="15" height="8" fill="#f0cb14"/><path d="M25 18h25" stroke="#a050d0" stroke-width=".8"/><path d="M25 21h50M25 24h40" stroke="#b5b5b5" stroke-width=".8"/><svg x="0" y="31" width="83" height="59"><use href="#comic" width="83" height="59"/></svg></svg>
<svg class="p" style="left:557px;top:419px"><use href="#ps" width="72" height="90"/></svg>
<svg class="t" style="left:656px;top:419px;width:83px;height:90px" viewBox="0 0 83 90"><rect width="83" height="32" fill="#d8d8d8"/><path d="M3 3h40M3 6h76M3 9h46" stroke="#b5b5b5" stroke-width=".8"/><path d="M30 9h40" stroke="#c07ae0" stroke-width=".8"/><rect x="7" y="17" width="15" height="8" fill="#f0cb14"/><path d="M25 18h25" stroke="#a050d0" stroke-width=".8"/><path d="M25 21h50M25 24h40" stroke="#b5b5b5" stroke-width=".8"/><svg x="0" y="31" width="83" height="59"><use href="#comic" width="83" height="59"/></svg></svg>
<svg class="t" style="left:759px;top:475px;width:90px;height:34px" viewBox="0 0 90 34"><rect width="90" height="34" fill="#d6d6d6"/><path d="M2 3h70M2 6h60M2 9h50" stroke="#b5b5b5" stroke-width=".8"/><path d="M26 8h40" stroke="#b070e0" stroke-width=".8"/><rect x="7" y="19" width="16" height="8" fill="#ecc81a"/><path d="M25 19h14" stroke="#a050d0" stroke-width=".8"/><path d="M25 23h55M25 26h45M2 32h16" stroke="#b5b5b5" stroke-width=".8"/></svg>
<svg class="t" style="left:865px;top:451px;width:90px;height:58px" viewBox="0 0 90 58"><rect width="90" height="58" fill="#fff"/><circle cx="8" cy="6" r="3" fill="#333"/><path d="M14 4h28M14 7h12" stroke="#3a5a90" stroke-width=".8"/><path d="M4 13h25M4 17h50M4 20h58M4 23h70M4 26h76M4 29h70M4 32h66M4 36h50M4 39h70" stroke="#9a9a9a" stroke-width=".7"/><path d="M4 42h74M4 45h30" stroke="#4080c0" stroke-width=".7"/><path d="M5 52h6M14 52h4M22 52h4M78 52h7" stroke="#bbb" stroke-width="2"/></svg>
<svg class="t" style="left:971px;top:448px;width:90px;height:61px" viewBox="0 0 90 61"><rect width="90" height="61" fill="#ececec"/><rect y="44" width="90" height="17" fill="#cfcfcf"/><g fill="#fff" stroke="#666" stroke-width=".6"><ellipse cx="12" cy="9" rx="9" ry="5"/><ellipse cx="28" cy="5" rx="7" ry="3"/><ellipse cx="43" cy="6" rx="9" ry="4"/><ellipse cx="62" cy="6" rx="9" ry="4"/><ellipse cx="80" cy="9" rx="9" ry="5"/><ellipse cx="9" cy="25" rx="8" ry="5"/><ellipse cx="82" cy="24" rx="8" ry="6"/><ellipse cx="8" cy="44" rx="8" ry="5"/><ellipse cx="25" cy="52" rx="8" ry="5"/><ellipse cx="45" cy="52" rx="9" ry="5"/><ellipse cx="65" cy="50" rx="9" ry="5"/><ellipse cx="82" cy="44" rx="8" ry="6"/><ellipse cx="46" cy="26" rx="19" ry="8"/></g><text x="36" y="29" font-size="6" font-weight="bold" font-family="Liberation Sans" fill="#111">ГОРДЫНЯ</text><path d="M28 26L12 14M28 26L10 26M30 32L12 42M62 26L80 14M62 28L78 42M45 34v12M36 18L30 9M55 18l5-8" stroke="#666" stroke-width=".5"/></svg>
<div class="l" style="left:222px;top:514px">В будде вор<br>видит только<br>его карманы.jpg</div>
<div class="l" style="left:328px;top:514px">В рамочке.png</div>
<div class="l" style="left:434px;top:514px">В шапку треда<br>Full.png</div>
<div class="l" style="left:540px;top:514px">В шапку треда<br>Full.psd</div>
<div class="l" style="left:646px;top:514px">В шапку треда<br>Full2.png</div>
<div class="l" style="left:752px;top:514px">В шапку<br>треда.png</div>
<div class="l" style="left:858px;top:514px">Война и<br>Мир.png</div>
<div class="l" style="left:964px;top:514px">Гордыня и<br>производные.jp<br>g</div>

<!-- ROW 4 -->
<svg class="t" style="left:229px;top:589px;width:90px;height:67px" viewBox="0 0 90 67"><use href="#webdoc" width="90" height="67"/><rect x="12" y="16" width="77" height="14" fill="#fff" stroke="#e59ef0"/><path d="M15 20h68M15 23h60M15 26h70" stroke="#b5b5c0" stroke-width=".8"/><rect y="65.500" width="90" height="1.500" fill="#7a4ab8"/><rect x="72" y="33" width="16" height="4" fill="#cfe0f4"/></svg>
<svg class="t" style="left:335px;top:630px;width:90px;height:26px" viewBox="0 0 90 26"><rect width="90" height="26" fill="#d6d6d6"/><path d="M2 2.500h50" stroke="#a5a5a5" stroke-width=".8"/><path d="M5 8h14" stroke="#ea8a3a"/><path d="M5 12h30" stroke="#7ab04a"/><path d="M5 16h78" stroke="#999"/><path d="M5 22h10" stroke="#ea8a3a"/></svg>
<svg class="t" style="left:441px;top:607px;width:90px;height:49px" viewBox="0 0 90 49"><use href="#pptbase" width="90" height="49"/><rect x="12" y="8" width="37" height="41" fill="#fff"/><rect x="17.500" y="12" width="29" height="33" fill="#fff" stroke="#8a8a8a" stroke-width="1.500"/></svg>
<svg class="p" style="left:557px;top:566px"><use href="#ps" width="72" height="90"/></svg>
<svg class="t" style="left:653px;top:607px;width:90px;height:49px" viewBox="0 0 90 49"><use href="#pptbase" width="90" height="49"/><rect x="22" y="8" width="60" height="41" fill="#fff"/><path d="M28.500 12.500h45v33h-45zM43.500 12.500v33M58.500 12.500v33M28.500 23.500h45M28.500 34.500h45" fill="none" stroke="#555" stroke-width="1"/></svg>
<svg class="t" style="left:759px;top:607px;width:90px;height:49px" viewBox="0 0 90 49"><use href="#pptbase" width="90" height="49"/><rect x="9" y="8" width="80" height="41" fill="#fff"/><rect x="13.500" y="21.500" width="53" height="17" rx="8.500" fill="#fff" stroke="#888" stroke-width="1"/></svg>
<svg class="p" style="left:875px;top:566px"><use href="#ps" width="72" height="90"/></svg>
<svg class="t" style="left:971px;top:607px;width:90px;height:49px" viewBox="0 0 90 49"><use href="#pptbase" width="90" height="49"/><rect x="9" y="8" width="81" height="38" fill="#fff"/><circle cx="29" cy="28" r="16" fill="#fff" stroke="#444"/><circle cx="67" cy="28" r="16" fill="#fff" stroke="#444"/></svg>
<div class="l" style="left:222px;top:661px">Догматы.jpg</div>
<div class="l" style="left:328px;top:661px">Курицын<br>Гаутамы Будды<br>или Курицын<br>Сергея Штор...</div>
<div class="l" style="left:434px;top:661px">Линия.png</div>
<div class="l" style="left:540px;top:661px">Линия.psd</div>
<div class="l" style="left:646px;top:661px">Линия2.png</div>
<div class="l" style="left:752px;top:661px">Линия3.png</div>
<div class="l" style="left:858px;top:661px">Линия3.psd</div>
<div class="l" style="left:964px;top:661px">Линия4.png</div>

<!-- ROW 5 -->
<svg class="t" style="left:229px;top:769px;width:90px;height:49px" viewBox="0 0 90 49"><use href="#pptbase" width="90" height="49"/><rect x="12" y="8" width="78" height="41" fill="#fff"/><path d="M21 10.500h62v36H21zM41.500 10.500v36M62 10.500v36M21 28.500h62" fill="none" stroke="#666" stroke-width="1.300"/></svg>
<svg class="t" style="left:347px;top:728px;width:66px;height:90px" viewBox="0 0 66 90"><rect width="66" height="90" fill="#fff"/><circle cx="4" cy="3" r="1.500" fill="#6a8ab0"/><path d="M8 3h8M3 7h14M3 11h50M3 15h8" stroke="#aaa" stroke-width=".7"/><rect x="2" y="20" width="61" height="60" fill="#12202c"/><ellipse cx="14" cy="45" rx="7" ry="8" fill="#a02a2a"/><ellipse cx="52" cy="70" rx="8" ry="7" fill="#8a2040"/><path d="M16 30q10-8 24-3l12 5-6 8-30-2z" fill="#3f2a3a"/><path d="M18 80q-4-22 8-30l14 2q12 10 10 28z" fill="#a88a50"/><path d="M24 36q8-6 15 0l2 14q-2 24-9 29-7-8-9-28z" fill="#d8d4c4"/><path d="M26 40q6-4 12 0l-1 8q-5 3-10 0z" fill="#b88a70"/><rect x="3" y="84" width="8" height="4" rx="1" fill="#e88"/><path d="M14 86h6M24 86h6M56 86h6" stroke="#bbb" stroke-width="2"/></svg>
<svg class="p" style="left:450px;top:727px;width:74px;height:91px;filter:blur(.3px)" viewBox="0 0 74 91"><path d="M1 1h52l20 22v67H1z" fill="#dff0fc" stroke="#2a74b8" stroke-width="2"/><path d="M53 1v22h20z" fill="#a8d4f4" stroke="#2a74b8"/><path d="M72 24v66H3v-2h67V24z" fill="#1c4a80"/><path d="M66 24Q18 14 5 48q-3 22 30 32l-6-8Q12 62 18 46 26 28 66 24z" fill="#8ec6ee"/><path d="M41 23l6-1q3 13 15 20 6 7-3 15 2-10-12-14v17q-2 14-20 16-18 0-18-13 2-14 32-18z" fill="#4a50c8"/><ellipse cx="22" cy="62" rx="10" ry="5" fill="#8a94ee" transform="rotate(-20 22 62)"/></svg>
<svg class="t" style="left:551px;top:728px;width:83px;height:90px;box-shadow:0 0 2px rgba(0,0,0,.3)" viewBox="0 0 83 90"><rect width="83" height="90" fill="#fff"/><rect x="1" y="4" width="80" height="38" fill="#f0f0f0" stroke="#333"/><rect x="1" y="46" width="80" height="38" fill="#f0f0f0" stroke="#333"/><path d="M3 10l8 6-4 10 6 10 10-4M28 20l15 12 15-8 14 12M5 40l20-8M60 10l20 12M36 8l8 6M66 20l8 8M6 14l6-6M4 30l12 2" fill="none" stroke="#333" stroke-width="1.600"/><rect x="18" y="2" width="17" height="28" rx="3" fill="#fff" stroke="#444"/><path d="M21 8h11M21 12h11M21 16h11M21 20h11" stroke="#777" stroke-width=".8"/><circle cx="55" cy="19" r="7" fill="#fff" stroke="#444"/><path d="M3 72q8-16 25-16l20 4 12 14 18 4v6H3zM15 60q16-12 30 0z" fill="#bbb" stroke="#333"/><path d="M8 68l10-6M16 72l10-8M30 70l10-4M38 76l8-6" stroke="#333"/><rect x="60" y="50" width="14" height="26" fill="#fff" stroke="#444"/><path d="M48 60h8v24h-8z" fill="#fff" stroke="#333"/><path d="M5 78l4 5M12 78l4 5M20 78l4 5M30 78l4 5" stroke="#222" stroke-width="2"/></svg>
<svg class="a" style="left:652px;top:727px;width:93px;height:92px;filter:blur(.3px)" viewBox="0 0 93 92"><path d="M18 1h54l21 22v68H18z" fill="#f2f6fc" stroke="#a9bcd6" stroke-width="1.500"/><path d="M72 1v22h21z" fill="#d4e2f2"/><rect x="18" y="88" width="75" height="4" fill="#8ea4c4"/><path d="M27 47h54M27 53h54M27 60h54M27 66h54M27 72h54M27 78h54" stroke="#97b2d6" stroke-width="2.500"/><rect x="64" y="23" width="18" height="20" fill="#b3cbe6"/><rect x="22" y="12" width="22" height="40" fill="#fff" stroke="#c0ccdc"/><path d="M26 18h16M26 23h16M26 28h16M26 33h16M26 38h16" stroke="#3a6ab6"/><path d="M1 20L28 10v42L1 46z" fill="#2e5dae"/><text x="3" y="39" font-family="Liberation Sans" font-size="20" font-weight="bold" fill="#fff" textLength="23" lengthAdjust="spacingAndGlyphs">W</text></svg>
<svg class="t" style="left:759px;top:751px;width:90px;height:67px" viewBox="0 0 90 67"><use href="#webdoc" width="90" height="67"/><rect x="12" y="46" width="76" height="14" fill="#fff" stroke="#e59ef0" opacity=".9"/></svg>
<svg class="t" style="left:865px;top:751px;width:90px;height:67px" viewBox="0 0 90 67"><use href="#webdoc" width="90" height="67"/><rect x="24" y="27" width="64" height="22" fill="#fff" stroke="#e59ef0"/><rect x="84" y="56" width="5" height="8" fill="#f0a0a0"/></svg>
<svg class="t" style="left:971px;top:751px;width:90px;height:67px" viewBox="0 0 90 67"><rect width="90" height="67" fill="#a8d9d9" rx="2"/><use href="#books" width="90" height="67"/></svg>
<div class="l" style="left:222px;top:823px">Линия5.png</div>
<div class="l" style="left:328px;top:823px">Лунь Юй -<br>Пристрастие.jpg</div>
<div class="l" style="left:434px;top:823px">Машина запись<br>перед<br>разлукой.mp3</div>
<div class="l" style="left:540px;top:823px">Мудрецом -<br>Простым<br>человеком.jpg</div>
<div class="l" style="left:646px;top:823px">Новая<br>нумерация.docx</div>
<div class="l" style="left:752px;top:823px">Относительные<br>прилагательные<br>.png</div>
<div class="l" style="left:858px;top:823px">Перекомпиляци<br>я сознания -<br>2.png</div>
<div class="l" style="left:964px;top:823px">Предварительно<br>- без сетки.png</div>

<!-- details -->
<svg class="a" style="left:1101px;top:136px;width:293px;height:220px;filter:blur(.25px)" viewBox="0 0 293 220"><use href="#poster" width="293" height="220"/><text x="27" y="11" font-size="6" font-weight="bold" fill="#333" font-family="Liberation Sans">Рекомендации №:</text><text x="35" y="21" font-size="6.500" font-weight="bold" fill="#0d6b4e" font-family="Liberation Sans">• Буддизм •</text></svg>
<svg class="a" style="left:1115px;top:389px;width:21px;height:27px" viewBox="0 0 21 27"><path d="M.5.500h13l7 7v19H.5z" fill="#fafafa" stroke="#999"/><path d="M13.500.5v7h7" fill="#e8e8e8" stroke="#999"/><rect x="5" y="10" width="11" height="12" fill="#2a8fe0"/><path d="M5 20l4-5 3 3 2-2 2 3v3H5z" fill="#bfe4ff"/></svg>
<div class="a" style="left:1151px;top:385px;font-size:16px;line-height:21px;color:#1a1a1a;white-space:nowrap;letter-spacing:.22px;-webkit-text-stroke:.35px #1a1a1a">Буддийский тред - ОП-<br>картинка (67).png</div>
<div class="a" style="left:1111px;top:441px;width:113px;height:29px;border:1px solid #e5e5e5;border-bottom-color:#d4d4d4;border-radius:4px"></div>
<svg class="i" style="left:1124px;top:447px" viewBox="0 0 16 16"><path d="M7 2.500H3Q1 2.500 1 4.500v8Q1 14.500 3 14.500h8q2 0 2-2V10" fill="none" stroke="#444"/><path d="M10 1l5 4.500L10 10V7.500Q6 7.500 4.500 11q0-6 5.500-6.500z" fill="none" stroke="#0a6cc4" stroke-width="1.100"/></svg>
<div class="n" style="left:1147px;top:448px;color:#222;letter-spacing:-.1px">Поделиться</div>
<div class="n" style="left:1111px;top:503px;color:#222;-webkit-text-stroke:.3px #222">Сведения</div>
<div class="d" style="left:1111px;top:531px">Тип</div><div class="v" style="top:531px;letter-spacing:-.3px">Файл "PNG"</div>
<div class="d" style="left:1111px;top:553px">Размер</div><div class="v" style="top:553px">7,64 МБ</div>
<div class="d" style="left:1111px;top:575px">Расположение...</div><div class="v" style="top:575px">D:\Рабочий Стол Последнее\Б...</div>
<div class="d" style="left:1111px;top:597px">Дата изменения</div><div class="v" style="top:597px;letter-spacing:-.35px">02.02.2023 3:32</div>
<div class="d" style="left:1111px;top:619px">Дата съемки</div><div class="v" style="top:619px;letter-spacing:-.38px">17.01.2023 12:46</div>
<div class="a" style="left:1105px;top:634px;width:283px;height:3px;background:#b44cf0"></div>
<div class="d" style="left:1111px;top:641px">Разрешение</div><div class="v" style="top:641px">4096 x 3072</div>
<div class="a" style="left:1111px;top:675px;width:99px;height:29px;border:1px solid #e5e5e5;border-bottom-color:#d4d4d4;border-radius:4px"></div>
<svg class="i" style="left:1123px;top:681px" viewBox="0 0 16 16"><path d="M15 3.500l-3 3-2.500-2.500 3-3Q9 0 7 2.500 5.500 4.500 6.500 7L1 12.500Q0 14 1 15t2.500 0L9 9.500Q11.500 10.500 13.500 9 16 7 15 3.500z" fill="none" stroke="#555"/></svg>
<div class="n" style="left:1147px;top:682px;color:#222;letter-spacing:-.2px">Свойства</div>

<!-- status -->
<div class="n" style="left:15px;top:875px;color:#444;letter-spacing:-.2px">Элементов: 128</div>
<div class="a" style="left:109px;top:875px;width:1px;height:15px;background:#e2e2e2"></div>
<div class="n" style="left:120px;top:875px;color:#444;letter-spacing:-.2px">Выбран 1 элемент: 7,64 МБ</div>
<div class="a" style="left:279px;top:875px;width:1px;height:15px;background:#e2e2e2"></div>
<svg class="i" style="left:1357px;top:875px" viewBox="0 0 16 16"><path d="M2 2.500h12M2 6.500h12M2 10.500h12M2 14h12" stroke="#555"/></svg>
<div class="a" style="left:1377px;top:873px;width:25px;height:21px;background:#e5f3ff;border:1px solid #0078d4"></div>
<svg class="i" style="left:1382px;top:876px" viewBox="0 0 16 16"><rect x="2.500" y="1.500" width="11" height="10" fill="none" stroke="#444"/><path d="M2 14.500h12" stroke="#444"/></svg>
</div></div>
</body></html>
